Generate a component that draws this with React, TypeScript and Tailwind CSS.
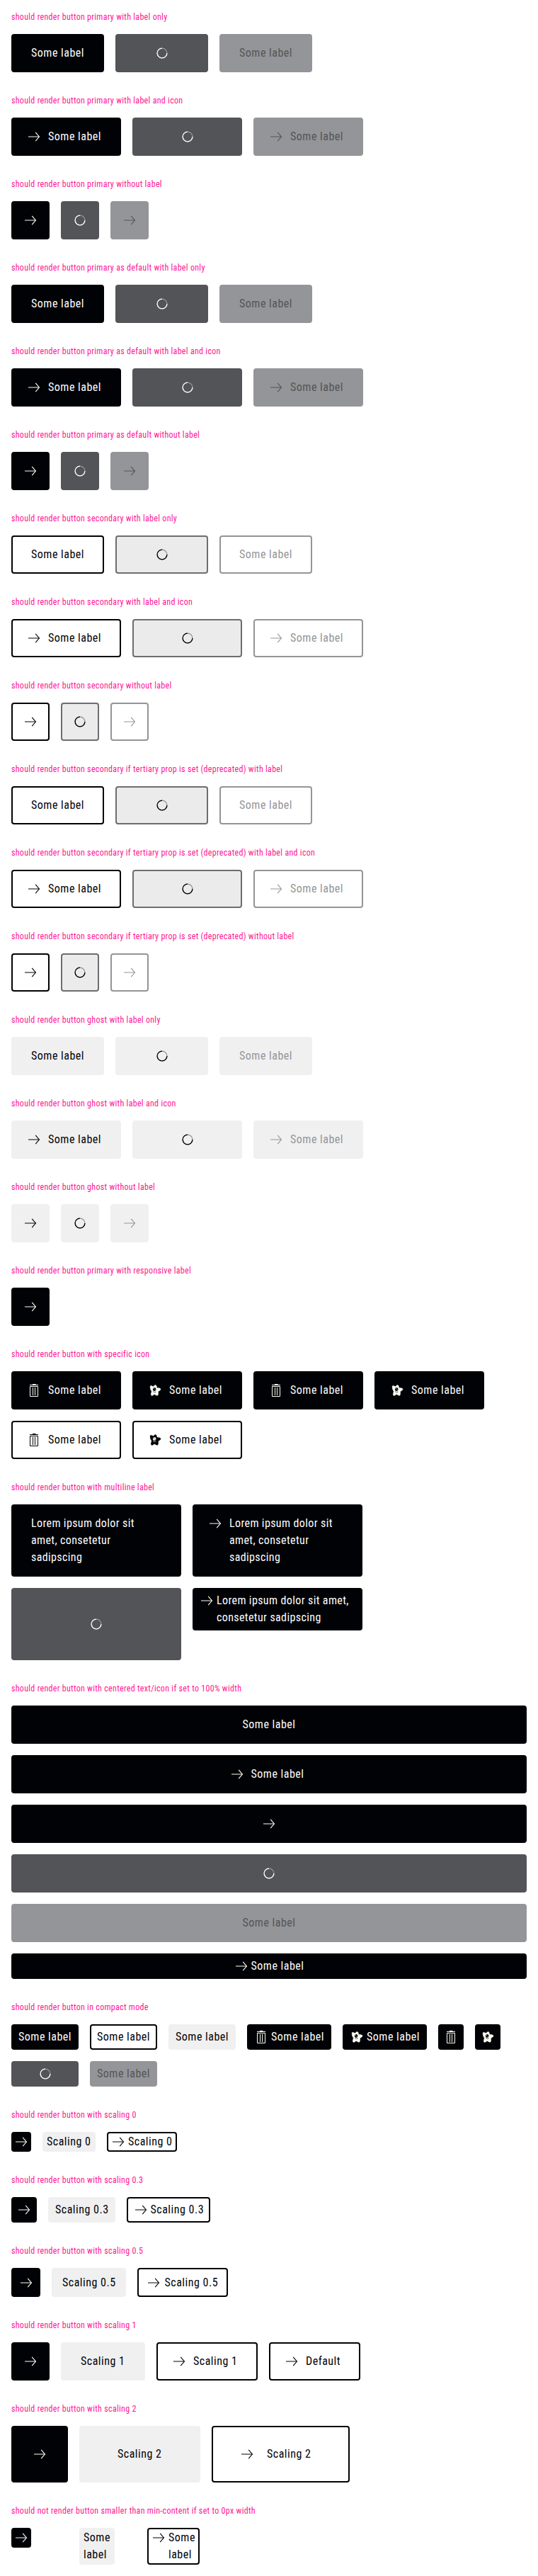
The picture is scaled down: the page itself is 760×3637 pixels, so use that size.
import React from "react";
import clsx from "clsx";

type Variant = "primary" | "secondary" | "ghost";
type State = "idle" | "loading" | "disabled";
type Size = "s0" | "s03" | "s05" | "s1" | "s2";
type IconName = "arrow" | "trash" | "star";

const ArrowIcon = () => (
  <svg viewBox="0 0 24 24" className="size-6 shrink-0" fill="none" stroke="currentColor">
    <path d="M4 12H19.6" strokeWidth="1" />
    <path d="M14.2 5.9L19.4 12L14.2 18.1" strokeWidth="1.15" />
  </svg>
);

const TrashIcon = () => (
  <svg viewBox="0 0 24 24" className="size-6 shrink-0" fill="none" stroke="currentColor">
    <path d="M10 3.5H14.5M6 4.5H18M6.5 6.5H17.5V20.5H6.5ZM10.5 8V19M13.5 8V19" />
  </svg>
);

const StarIcon = ({ hole }: { hole: string }) => (
  <svg viewBox="0 0 24 24" className="size-6 shrink-0">
    <path
      d="M5.2 7.2Q4.8 5.2 6.6 5.6L9.8 6.8Q11.6 4.2 13 4.6Q14.4 5.4 14.5 8.4L18.8 9Q20.6 10 19.6 11.4L16.4 13.8L16.4 17.8Q15.8 20 14 19L11.2 17.4L8 19.4Q6 19.4 6.4 17.2L7.3 13.4L5.6 10.2Z"
      fill="currentColor"
      stroke="currentColor"
      strokeWidth="0.6"
      strokeLinejoin="round"
    />
    <ellipse cx="11.2" cy="10.4" rx="2.3" ry="2.5" fill={hole} />
    <circle cx="10.4" cy="9.6" r="0.6" fill="currentColor" />
    <circle cx="12.1" cy="11.3" r="0.55" fill="currentColor" />
    <path d="M9 13.6Q11 15.3 13.6 14.2" fill="none" stroke={hole} strokeWidth="0.6" />
  </svg>
);

const Spinner = () => (
  <svg viewBox="0 0 24 24" className="size-6 shrink-0" fill="none" stroke="currentColor" strokeWidth="1.3">
    <circle cx="12" cy="12" r="6.9" strokeOpacity="0.4" />
    <path d="M18.9 12A6.9 6.9 0 1 1 12 5.1" />
  </svg>
);

const colors: Record<Variant, Record<State, string>> = {
  primary: {
    idle: "bg-[#010205] border-[#010205] text-[#fbfcff]",
    loading: "bg-[#535457] border-[#535457] text-[#fbfcff]",
    disabled: "bg-[#949598] border-[#949598] text-[#535457]",
  },
  secondary: {
    idle: "bg-white border-[#010205] text-[#010205]",
    loading: "bg-[#ebebeb] border-[#6b6d70] text-[#010205]",
    disabled: "bg-white border-[#949598] text-[#949598]",
  },
  ghost: {
    idle: "bg-[#f0f0f1] border-[#f0f0f1] text-[#010205]",
    loading: "bg-[#f0f0f1] border-[#f0f0f1] text-[#010205]",
    disabled: "bg-[#f0f0f1] border-[#f0f0f1] text-[#949598]",
  },
};

/* Paddings exclude the 2px border. */
const sizes: Record<Size, { y: string; text: string; icon: string; square: string }> = {
  s0: { y: "py-0", text: "px-[4px]", icon: "pl-[2px] pr-[4px] gap-[2px]", square: "px-0" },
  s03: { y: "py-[4px]", text: "px-[8px]", icon: "pl-[6px] pr-[8px] gap-[2px]", square: "px-[4px]" },
  s05: { y: "py-[6.5px]", text: "px-[13px]", icon: "pl-[9px] pr-[13px] gap-[4px]", square: "px-[6.5px]" },
  s1: { y: "py-[13px]", text: "px-[26px]", icon: "pl-[18px] pr-[26px] gap-[8px]", square: "px-[13px]" },
  s2: { y: "py-[26px]", text: "px-[52px]", icon: "pl-[36px] pr-[52px] gap-[16px]", square: "px-[26px]" },
};

type ButtonProps = {
  variant?: Variant;
  state?: State;
  size?: Size;
  icon?: IconName;
  label?: React.ReactNode;
  labelWidth?: string;
  className?: string;
};

function Button({
  variant = "primary",
  state = "idle",
  size = "s1",
  icon,
  label,
  labelWidth = "w-[75px]",
  className,
}: ButtonProps) {
  const s = sizes[size];
  const pad = label ? (icon ? s.icon : s.text) : s.square;
  const loading = state === "loading";
  const iconTone = variant === "primary" && state === "idle" ? "text-[#fffef6]" : "";
  return (
    <button
      type="button"
      className={clsx(
        "relative flex items-start justify-center rounded-[4px] border-2 text-left text-base leading-6 tracking-[0.5px]",
        colors[variant][state],
        s.y,
        pad,
        className,
      )}
    >
      {icon && (
        <span className={clsx("flex shrink-0", iconTone, loading && "invisible")}>
          {icon === "arrow" && <ArrowIcon />}
          {icon === "trash" && <TrashIcon />}
          {icon === "star" && <StarIcon hole={variant === "primary" ? "#010205" : "#ffffff"} />}
        </span>
      )}
      {label && (
        <span className={clsx("block shrink-0 whitespace-nowrap", labelWidth, loading && "invisible")}>{label}</span>
      )}
      {loading && (
        <span className="absolute inset-0 flex items-center justify-center">
          <Spinner />
        </span>
      )}
    </button>
  );
}

function Section({ title, children }: { title: string; children: React.ReactNode }) {
  return (
    <section>
      <h2 className="mb-4 text-xs leading-4 tracking-[0.3px] text-[#ff1493]">{title}</h2>
      <div className="flex flex-wrap items-start gap-4">{children}</div>
    </section>
  );
}

const states: State[] = ["idle", "loading", "disabled"];

const groups: { name: string; variant: Variant; titles: [string, string, string] }[] = [
  { name: "primary", variant: "primary", titles: ["with label only", "with label and icon", "without label"] },
  { name: "primary as default", variant: "primary", titles: ["with label only", "with label and icon", "without label"] },
  { name: "secondary", variant: "secondary", titles: ["with label only", "with label and icon", "without label"] },
  {
    name: "secondary if tertiary prop is set (deprecated)",
    variant: "secondary",
    titles: ["with label", "with label and icon", "without label"],
  },
  { name: "ghost", variant: "ghost", titles: ["with label only", "with label and icon", "without label"] },
];

const lorem = (
  <span className="tracking-[0.38px]">
    Lorem ipsum dolor sit
    <br />
    amet, consetetur
    <br />
    sadipscing
  </span>
);

export default function App() {
  return (
    <main className="flex w-[760px] flex-col gap-8 bg-white p-4 font-['Roboto_Condensed','Roboto',sans-serif] font-stretch-condensed">
      {groups.map((g) =>
        g.titles.map((t, i) => (
          <Section key={g.name + t} title={`should render button ${g.name} ${t}`}>
            {states.map((st) => (
              <Button
                key={st}
                variant={g.variant}
                state={st}
                icon={i > 0 ? "arrow" : undefined}
                label={i < 2 ? "Some label" : undefined}
              />
            ))}
          </Section>
        )),
      )}

      <Section title="should render button primary with responsive label">
        <Button icon="arrow" />
      </Section>

      <Section title="should render button with specific icon">
        <Button icon="trash" label="Some label" />
        <Button icon="star" label="Some label" />
        <Button icon="trash" label="Some label" />
        <Button icon="star" label="Some label" />
        <Button variant="secondary" icon="trash" label="Some label" />
        <Button variant="secondary" icon="star" label="Some label" />
      </Section>

      <Section title="should render button with multiline label">
        <Button className="w-[240px]" labelWidth="w-[184px]" label={lorem} />
        <Button className="w-[240px]" labelWidth="w-[160px]" icon="arrow" label={lorem} />
        <Button className="w-[240px]" labelWidth="w-[184px]" state="loading" label={lorem} />
        <Button
          className="w-[240px]"
          size="s03"
          labelWidth="w-[196px]"
          icon="arrow"
          label={
            <span className="tracking-[0.38px]">
              Lorem ipsum dolor sit amet,
              <br />
              consetetur sadipscing
            </span>
          }
        />
      </Section>

      <Section title="should render button with centered text/icon if set to 100% width">
        <Button className="w-full" label="Some label" />
        <Button className="w-full" icon="arrow" label="Some label" />
        <Button className="w-full" icon="arrow" />
        <Button className="w-full" state="loading" label="Some label" />
        <Button className="w-full" state="disabled" label="Some label" />
        <Button className="w-full" size="s03" icon="arrow" label="Some label" />
      </Section>

      <Section title="should render button in compact mode">
        <Button size="s03" label="Some label" />
        <Button size="s03" variant="secondary" label="Some label" />
        <Button size="s03" variant="ghost" label="Some label" />
        <Button size="s03" icon="trash" label="Some label" />
        <Button size="s03" icon="star" label="Some label" />
        <Button size="s03" icon="trash" />
        <Button size="s03" icon="star" />
        <Button size="s03" state="loading" label="Some label" />
        <Button size="s03" state="disabled" label="Some label" />
      </Section>

      <Section title="should render button with scaling 0">
        <Button size="s0" icon="arrow" />
        <Button size="s0" variant="ghost" label="Scaling 0" labelWidth="w-[63px]" />
        <Button size="s0" variant="secondary" icon="arrow" label="Scaling 0" labelWidth="w-[63px]" />
      </Section>

      <Section title="should render button with scaling 0.3">
        <Button size="s03" icon="arrow" />
        <Button size="s03" variant="ghost" label="Scaling 0.3" labelWidth="w-[74.5px]" />
        <Button size="s03" variant="secondary" icon="arrow" label="Scaling 0.3" labelWidth="w-[74.5px]" />
      </Section>

      <Section title="should render button with scaling 0.5">
        <Button size="s05" icon="arrow" />
        <Button size="s05" variant="ghost" label="Scaling 0.5" labelWidth="w-[74.5px]" />
        <Button size="s05" variant="secondary" icon="arrow" label="Scaling 0.5" labelWidth="w-[74.5px]" />
      </Section>

      <Section title="should render button with scaling 1">
        <Button icon="arrow" />
        <Button variant="ghost" label="Scaling 1" labelWidth="w-[63px]" />
        <Button variant="secondary" icon="arrow" label="Scaling 1" labelWidth="w-[63px]" />
        <Button variant="secondary" icon="arrow" label="Default" labelWidth="w-[49px]" />
      </Section>

      <Section title="should render button with scaling 2">
        <Button size="s2" icon="arrow" />
        <Button size="s2" variant="ghost" label="Scaling 2" labelWidth="w-[63px]" />
        <Button size="s2" variant="secondary" icon="arrow" label="Scaling 2" labelWidth="w-[63px]" />
      </Section>

      <Section title="should not render button smaller than min-content if set to 0px width">
        <div className="flex w-20">
          <Button size="s0" icon="arrow" />
        </div>
        <div className="flex w-20">
          <Button size="s0" variant="ghost" labelWidth="w-[38px]" label={<>Some<br />label</>} />
        </div>
        <div className="flex w-20">
          <Button size="s0" variant="secondary" icon="arrow" labelWidth="w-[38px]" label={<>Some<br />label</>} />
        </div>
      </Section>
    </main>
  );
}
